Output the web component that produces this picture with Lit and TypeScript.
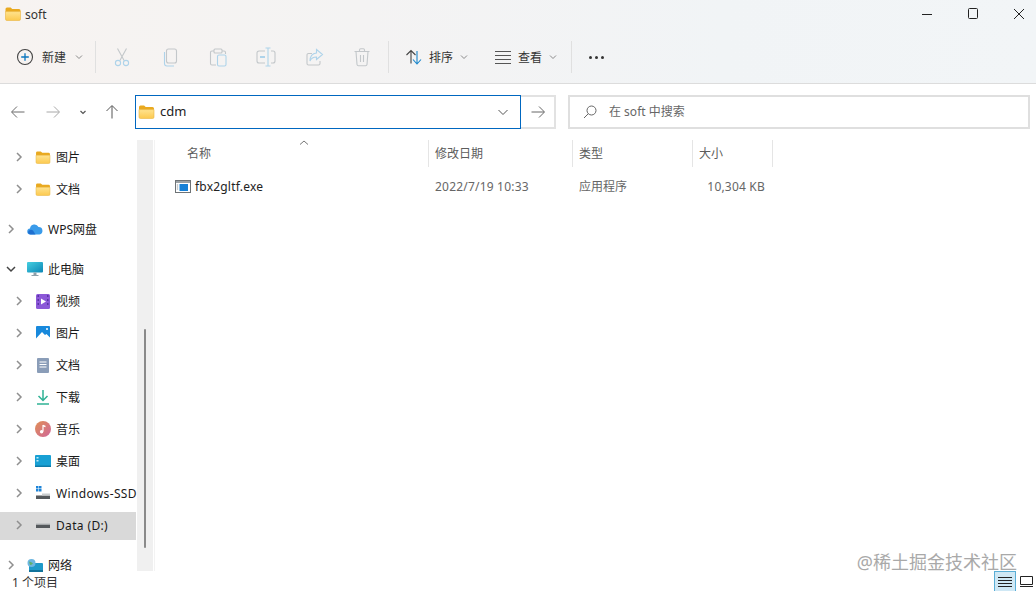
import { LitElement, html, css, svg } from "lit";
import { customElement } from "lit/decorators.js";

const folder = (w = 16, h = 14) => html`<svg width=${w} height=${h} viewBox="0 0 16 14">
  <defs><linearGradient id="fg" x1="0" y1="0" x2="0" y2="1"><stop offset="0" stop-color="#ffe38f"/><stop offset="1" stop-color="#fcc94e"/></linearGradient></defs>
  <path d="M0.5 2a1.5 1.5 0 0 1 1.5-1.5h3.6l1.6 1.5H14a1.5 1.5 0 0 1 1.5 1.5V5H.5z" fill="#e9a91f"/>
  <path d="M.5 4.6h15V12a1.5 1.5 0 0 1-1.5 1.5H2A1.5 1.5 0 0 1 .5 12z" fill="url(#fg)" stroke="#eab643" stroke-width=".6"/>
</svg>`;

const chevR = html`<svg width="12" height="12" viewBox="0 0 12 12"><path d="M4 2l4 4-4 4" fill="none" stroke="#8f8f8f" stroke-width="1.5"/></svg>`;
const chevD = html`<svg width="12" height="12" viewBox="0 0 12 12"><path d="M2 4l4 4 4-4" fill="none" stroke="#444" stroke-width="1.5"/></svg>`;
const miniChev = html`<svg class="mini" width="8" height="8" viewBox="0 0 8 8"><path d="M1 2.5l3 3 3-3" fill="none" stroke="#8a8a8a" stroke-width="1"/></svg>`;

const tool = (body: unknown) => html`<svg width="20" height="20" viewBox="0 0 20 20" fill="none" stroke-width="1.1">${body}</svg>`;
const G = "#c3c7ca";
const B = "#aed3ea";
const icons = {
  cut: tool(svg`<path d="M5.5 1.5l6.6 12M14.5 1.5l-6.6 12" stroke=${G}/><circle cx="6" cy="16" r="2.6" stroke=${B}/><circle cx="14" cy="16" r="2.6" stroke=${B}/>`),
  copy: tool(svg`<rect x="6.5" y="2" width="10" height="14" rx="2" stroke=${G}/><path d="M4.500 5v11.500a2.500 2.500 0 0 0 2.500 2.500h7" stroke=${B}/>`),
  paste: tool(svg`<path d="M6 4H4a1.500 1.500 0 0 0-1.500 1.500v11A1.500 1.500 0 0 0 4 18h4M14 4h2a1.500 1.500 0 0 1 1.500 1.500V7" stroke=${G}/><rect x="6" y="2" width="8" height="4" rx="1" stroke=${G}/><rect x="9.500" y="8" width="8.500" height="11" rx="1.500" stroke=${B}/>`),
  rename: tool(svg`<path d="M9 4H3a2 2 0 0 0-2 2v8a2 2 0 0 0 2 2h6M15 4h2a2 2 0 0 1 2 2v8a2 2 0 0 1-2 2h-2" stroke=${G}/><path d="M12 1v18M9.500 1h5M9.500 19h5" stroke=${B}/><path d="M4 10h5" stroke=${B} stroke-width="2"/>`),
  share: tool(svg`<path d="M3 8v8.500A1.500 1.500 0 0 0 4.500 18h10a1.500 1.500 0 0 0 1.500-1.500V14M3 8a1.500 1.500 0 0 1 1.500-1.500H8" stroke=${G}/><path d="M12.500 2.500l6 5-6 5V10c-3.500 0-5.500 1.500-6.500 4 0-4.500 2.500-7.500 6.500-8z" stroke=${B}/>`),
  trash: tool(svg`<path d="M2.500 4.500h15M7.500 4.500V3a1.200 1.200 0 0 1 1.200-1.200h2.600A1.200 1.200 0 0 1 12.500 3v1.500M4 4.500l1 13a1.500 1.500 0 0 0 1.500 1.300h7a1.500 1.500 0 0 0 1.500-1.300l1-13M8.500 8v7M11.500 8v7" stroke=${G}/>`),
};

const plus = html`<svg width="18" height="18" viewBox="0 0 18 18" fill="none"><circle cx="9" cy="9" r="7.500" stroke="#444" stroke-width="1.100"/><path d="M9 5.200v7.600M5.200 9h7.600" stroke="#0b76bd" stroke-width="1.300"/></svg>`;
const sort = html`<svg width="18" height="18" viewBox="0 0 18 18" fill="none" stroke-width="1.100"><path d="M6 15.500V2.500M1.500 7l4.500-4.500L10.500 7" stroke="#444"/><path d="M12 3v13M8 11.500l4 4.500 4-4.500" stroke="#1a86cb"/></svg>`;
const viewIcon = html`<svg width="18" height="14" viewBox="0 0 18 14" stroke="#555" stroke-width="1"><path d="M1 1.500h16M1 5.500h16M1 9.500h16M1 13.500h16"/></svg>`;
const arrow = (d: string, c: string) => html`<svg width="16" height="16" viewBox="0 0 16 16" fill="none" stroke=${c} stroke-width="1"><path d=${d}/></svg>`;
const L = "M14.500 8H2M7 2.500L1.500 8 7 13.500";
const R = "M1.500 8H14M9 2.500L14.500 8 9 13.500";
const U = "M8 14.500V2M2.500 7L8 1.500 13.500 7";

const exe = html`<svg width="16" height="13" viewBox="0 0 16 13"><rect x=".5" y=".5" width="15" height="12" fill="#fff" stroke="#6e7376"/><rect x="1" y="1" width="14" height="2" fill="#9aa0a4"/><rect x="4.500" y="4" width="8.500" height="7" fill="#1680d6"/><path d="M2.500 4.500v6" stroke="#8f979c" stroke-width="1.400" stroke-dasharray="1 1"/></svg>`;

const sideIcons: Record<string, unknown> = {
  folder: folder(16, 13),
  cloud: html`<svg width="16" height="12" viewBox="0 0 16 12"><path d="M3.500 11.500a3 3 0 0 1-.5-6A4.500 4.500 0 0 1 11.500 4a3.800 3.800 0 0 1 1 7.500z" fill="#3a9bea"/><path d="M1 9.500a3 3 0 0 1 5-2l2.500 4h-5a3 3 0 0 1-2.500-2z" fill="#1e6fd0"/></svg>`,
  pc: html`<svg width="16" height="16" viewBox="0 0 16 16"><defs><linearGradient id="pcg" x1="0" y1="0" x2="1" y2="1"><stop offset="0" stop-color="#45cfe0"/><stop offset="1" stop-color="#0d86b6"/></linearGradient></defs><rect y="1" width="16" height="10.500" rx="1" fill="url(#pcg)"/><rect x="6.500" y="11.500" width="3" height="2.500" fill="#8fa0aa"/><rect x="4.500" y="14" width="7" height="1" fill="#8fa0aa"/></svg>`,
  video: html`<svg width="14" height="15" viewBox="0 0 14 15"><rect width="14" height="15" rx="1.500" fill="#8c58d8"/><path d="M5 4.500l5 3-5 3z" fill="#fff"/><path d="M1.500 2h1.500M1.500 6h1.500M1.500 10h1.500M11 2h1.500M11 6h1.500M11 10h1.500" stroke="#4a2796" stroke-width="1.500"/></svg>`,
  image: html`<svg width="14" height="14" viewBox="0 0 14 14"><rect width="14" height="14" rx="1" fill="#1889dc"/><path d="M0 12.500L6 6l3 3 1.500-1L14 11.500V14H0z" fill="#fff"/><circle cx="11" cy="3" r="1" fill="#fff"/></svg>`,
  doc: html`<svg width="12" height="15" viewBox="0 0 12 15"><rect width="12" height="15" rx="1" fill="#8a9db8"/><path d="M2.500 4h7M2.500 6.500h7M2.500 9h7" stroke="#fff" stroke-width="1"/></svg>`,
  down: html`<svg width="14" height="15" viewBox="0 0 14 15" fill="none" stroke="#2fb295" stroke-width="1.500"><path d="M7 0v10M2.500 6L7 10.500 11.500 6"/><path d="M1 14h12"/></svg>`,
  music: html`<svg width="16" height="16" viewBox="0 0 16 16"><defs><linearGradient id="mg" x1="0" y1="0" x2="1" y2="1"><stop offset="0" stop-color="#e08f55"/><stop offset="1" stop-color="#d0679a"/></linearGradient></defs><circle cx="8" cy="8" r="8" fill="url(#mg)"/><path d="M8 4v6.500" stroke="#fff" stroke-width="1.200"/><path d="M8 3.800l2.500 1v1.400L8 5.500z" fill="#fff"/><circle cx="6.600" cy="10.800" r="1.700" fill="#fff"/></svg>`,
  desk: html`<svg width="16" height="12" viewBox="0 0 16 12"><rect width="16" height="12" rx="1" fill="#18a0d4"/><rect x="1.500" y="2" width="2" height="1.500" fill="#bdeaf8"/><rect x="1.500" y="5" width="2" height="1.500" fill="#bdeaf8"/><rect y="10.500" width="16" height="1.500" fill="#0e7aa8"/></svg>`,
  ssd: html`<svg width="16" height="14" viewBox="0 0 16 14"><path d="M1 0h2.500v2.500H1zM4 0h2.500v2.500H4zM1 3h2.500v2.500H1zM4 3h2.500v2.500H4z" fill="#1d84d8"/><rect x="1" y="9.500" width="14" height="3.500" fill="#54595c"/><rect x="7" y="7.500" width="8" height="2" fill="#c9cdcf"/></svg>`,
  drive: html`<svg width="14" height="5" viewBox="0 0 14 5"><rect y="1.500" width="14" height="3.500" fill="#55595c"/><rect y=".5" width="14" height="1" fill="#b5b9bb"/></svg>`,
  net: html`<svg width="16" height="13" viewBox="0 0 16 13"><rect x="2" y="4" width="14" height="9" rx="1" fill="#1f9ac9"/><rect x="2" y="11" width="14" height="2" fill="#12739b"/><circle cx="4.500" cy="4" r="4" fill="#6db6e0"/><path d="M2 2.500c1.500.5 3 .5 4 2-1 1-2 1.500-3 1.500z" fill="#5fb06d"/></svg>`,
};

type Row = { label: string; icon: string; top?: boolean; open?: boolean; sel?: boolean; gap?: boolean; lat?: boolean };
const rows: Row[] = [
  { label: "图片", icon: "folder" },
  { label: "文档", icon: "folder" },
  { label: "WPS网盘", icon: "cloud", top: true, gap: true },
  { label: "此电脑", icon: "pc", top: true, open: true, gap: true },
  { label: "视频", icon: "video" },
  { label: "图片", icon: "image" },
  { label: "文档", icon: "doc" },
  { label: "下载", icon: "down" },
  { label: "音乐", icon: "music" },
  { label: "桌面", icon: "desk" },
  { label: "Windows-SSD", icon: "ssd", lat: true },
  { label: "Data (D:)", icon: "drive", sel: true, lat: true },
  { label: "网络", icon: "net", top: true, gap: true },
];

@customElement("app-root")
export class AppRoot extends LitElement {
  static styles = css`
    :host { display: block; font-family: "Noto Sans", "Noto Sans CJK SC", sans-serif; font-size: 12px; color: #222; }
    .win { position: relative; width: 1036px; height: 591px; overflow: hidden; background: #fff; display: flex; flex-direction: column; }
    .chrome { background: linear-gradient(90deg, #f7f3f1 0%, #f4f3f3 35%, #f1f4f6 70%, #f2f5f7 100%); border-bottom: 1px solid #dcdcdc; }
    .title { height: 28px; display: flex; align-items: center; padding-left: 5px; gap: 4px; }
    .title .name { flex: 1; color: #333; }
    .ctrls { display: flex; gap: 32px; padding-right: 10px; }
    .ctrls svg { display: block; }
    .toolbar { height: 52px; margin-top: 3px; padding-left: 16px; display: flex; align-items: center; }
    .btn { display: flex; align-items: center; }
    .btn .t { color: #333; }
    .mc { display: flex; }
    .new { width: 79px; gap: 8px; }
    .new .mc { margin-left: 1px; }
    .sep { width: 1px; height: 32px; background: #e0e0e0; flex: none; }
    .tools { display: flex; margin: 0 2px; }
    .tools .ti { width: 48px; display: flex; justify-content: center; }
    .sortb { margin-left: 16px; width: 73px; gap: 6px; }
    .sortb .mc { margin-left: 1px; }
    .viewb { margin-left: 16px; gap: 6px; width: 77px; }
    .viewb .mc { margin-left: 1px; }
    .dots { margin-left: 17px; display: flex; gap: 3px; }
    .dots i { width: 3px; height: 3px; border-radius: 50%; background: #333; display: block; }
    .addr { height: 56px; flex: none; display: flex; align-items: center; padding-left: 10px; }
    .nav { display: flex; align-items: center; }
    .nav svg { display: block; }
    .sp19 { width: 19px; } .sp16 { width: 16px; } .sp15 { width: 15px; }
    .box { height: 34px; box-sizing: border-box; display: flex; align-items: center; }
    .box span { padding-bottom: 2px; }
    .path { width: 386px; margin-left: 15px; border: 1px solid #0067c0; border-bottom-width: 1.5px; padding: 0 11px 0 2px; gap: 5px; color: #222; font-size: 13px; }
    .path .v { flex: 1; }
    .go { width: 35px; border: 2px solid #e2e2e2; border-left: none; justify-content: center; }
    .search { width: 462px; margin-left: 12px; border: 2px solid #dfdfdf; padding-left: 13px; gap: 12px; color: #666; }
    .body { flex: 1; min-height: 0; display: flex; }
    .side { width: 137px; flex: none; padding-top: 1px; box-sizing: border-box; }
    .row { height: 32px; box-sizing: border-box; display: flex; align-items: center; padding-left: 13px; position: relative; white-space: nowrap; color: #1a1a1a; overflow: hidden; }
    .row.top { padding-left: 5px; }
    .row.gap { margin-top: 8px; }
    .row.sel::before { content: ""; position: absolute; left: 0; right: 1px; top: 3px; bottom: 1px; background: #d9d9d9; }
    .row > * { position: relative; }
    .lat { letter-spacing: .35px; }
    .cv { width: 12px; height: 12px; flex: none; margin-right: 10px; }
    .cv svg { display: block; }
    .ic { width: 16px; flex: none; margin-right: 5px; display: flex; justify-content: center; align-items: center; }
    .track { width: 16px; flex: none; background: #f0f0f0; position: relative; }
    .thumb { position: absolute; left: 7px; top: 189px; width: 2px; height: 219px; background: #8a8a8a; border-radius: 1px; }
    .main { flex: 1; border-left: 1px solid #f3f3f3; margin-left: 1px; position: relative; }
    .cols { display: grid; grid-template-columns: 274px 144px 120px 80px; }
    .hd { height: 27px; display: flex; align-items: center; padding: 0 0 1px 6px; color: #5c5c5c; border-right: 1px solid #e5e5e5; box-sizing: border-box; }
    .hd.first { padding-left: 32px; }
    .caret { position: absolute; left: 144px; top: 0; }
    .cell { height: 38px; display: flex; align-items: center; padding-left: 6px; color: #666; }
    .cell.l { letter-spacing: .2px; }
    .cell.first { padding-left: 20px; gap: 4px; color: #222; }
    .cell.num { justify-content: flex-end; padding: 0 8px 0 0; }
    .status { height: 20px; flex: none; display: flex; align-items: center; padding-left: 12px; position: relative; color: #333; }
    .status .s { flex: 1; padding-top: 2px; }
    .vt { width: 22px; height: 20px; box-sizing: border-box; background: #cfe8f5; border: 1px solid #5aaed6; border-bottom: none; display: flex; justify-content: center; align-items: center; }
    .vt2 { margin: 0 3px 0 4px; display: block; }
    .mark { position: absolute; right: 19px; top: 549px; font-size: 18px; line-height: 26px; color: #a9a9a9; white-space: nowrap; }
  `;

  render() {
    return html`<div class="win">
      <div class="chrome">
        <div class="title">
          ${folder(16, 14)}<span class="name">soft</span>
          <div class="ctrls">
            <svg width="14" height="14" viewBox="0 0 14 14"><path d="M2 7.500h10" stroke="#222"/></svg>
            <svg width="14" height="14" viewBox="0 0 14 14"><rect x="2.500" y="1.500" width="9" height="10" rx="1" fill="none" stroke="#222"/></svg>
            <svg width="14" height="14" viewBox="0 0 14 14"><path d="M2 2l10 10M12 2L2 12" stroke="#222"/></svg>
          </div>
        </div>
        <div class="toolbar">
          <div class="btn new">${plus}<span class="t">新建</span><span class="mc">${miniChev}</span></div>
          <div class="sep"></div>
          <div class="tools">
            ${[icons.cut, icons.copy, icons.paste, icons.rename, icons.share, icons.trash].map((i) => html`<span class="ti">${i}</span>`)}
          </div>
          <div class="sep"></div>
          <div class="btn sortb">${sort}<span class="t">排序</span><span class="mc">${miniChev}</span></div>
          <div class="btn viewb">${viewIcon}<span class="t">查看</span><span class="mc">${miniChev}</span></div>
          <div class="sep"></div>
          <div class="dots"><i></i><i></i><i></i></div>
        </div>
      </div>
      <div class="addr">
        <div class="nav">
          ${arrow(L, "#6b6b6b")}
          <span class="sp19"></span>${arrow(R, "#a8a8a8")}
          <span class="sp16"></span><svg width="12" height="12" viewBox="0 0 12 12"><path d="M3.500 5l2.500 2.500L8.500 5" fill="none" stroke="#555" stroke-width="1.200"/></svg>
          <span class="sp15"></span>${arrow(U, "#555")}
        </div>
        <div class="box path">${folder(17, 14)}<span class="v">cdm</span>
          <svg width="12" height="12" viewBox="0 0 12 12"><path d="M1.500 4L6 8.500 10.500 4" fill="none" stroke="#555" stroke-width="1"/></svg></div>
        <div class="box go">${arrow(R, "#666")}</div>
        <div class="box search">
          <svg width="14" height="14" viewBox="0 0 14 14" fill="none" stroke="#666" stroke-width="1"><circle cx="8.500" cy="5.500" r="4.500"/><path d="M5.300 8.700L1 13"/></svg>
          <span>在 soft 中搜索</span>
        </div>
      </div>
      <div class="body">
        <div class="side">
          ${rows.map((r) => html`<div class="row ${r.top ? "top" : ""} ${r.gap ? "gap" : ""} ${r.sel ? "sel" : ""}">
            <span class="cv">${r.open ? chevD : chevR}</span>
            <span class="ic">${sideIcons[r.icon]}</span>
            <span class=${r.lat ? "lat" : ""}>${r.label}</span>
          </div>`)}
        </div>
        <div class="track"><div class="thumb"></div></div>
        <div class="main">
          <svg class="caret" width="10" height="6" viewBox="0 0 10 6"><path d="M1 4.500L5 1l4 3.500" fill="none" stroke="#777" stroke-width="1"/></svg>
          <div class="cols">
            <div class="hd first">名称</div><div class="hd">修改日期</div><div class="hd">类型</div><div class="hd">大小</div>
            <div class="cell first l">${exe}<span>fbx2gltf.exe</span></div>
            <div class="cell l">2022/7/19 10:33</div><div class="cell">应用程序</div><div class="cell num l">10,304 KB</div>
          </div>
        </div>
      </div>
      <div class="status">
        <span class="s">1 个项目</span>
        <div class="vt"><svg width="14" height="12" viewBox="0 0 14 12" stroke="#222" stroke-width="1"><path d="M0 1.500h14M0 4.500h14M0 7.500h14M0 10.500h14"/></svg></div>
        <svg class="vt2" width="13" height="11" viewBox="0 0 13 11" fill="none" stroke="#222"><path d="M.5.500h12v8H.500z"/><path d="M0 10.500h13"/></svg>
      </div>
      <div class="mark">@稀土掘金技术社区</div>
    </div>`;
  }
}
